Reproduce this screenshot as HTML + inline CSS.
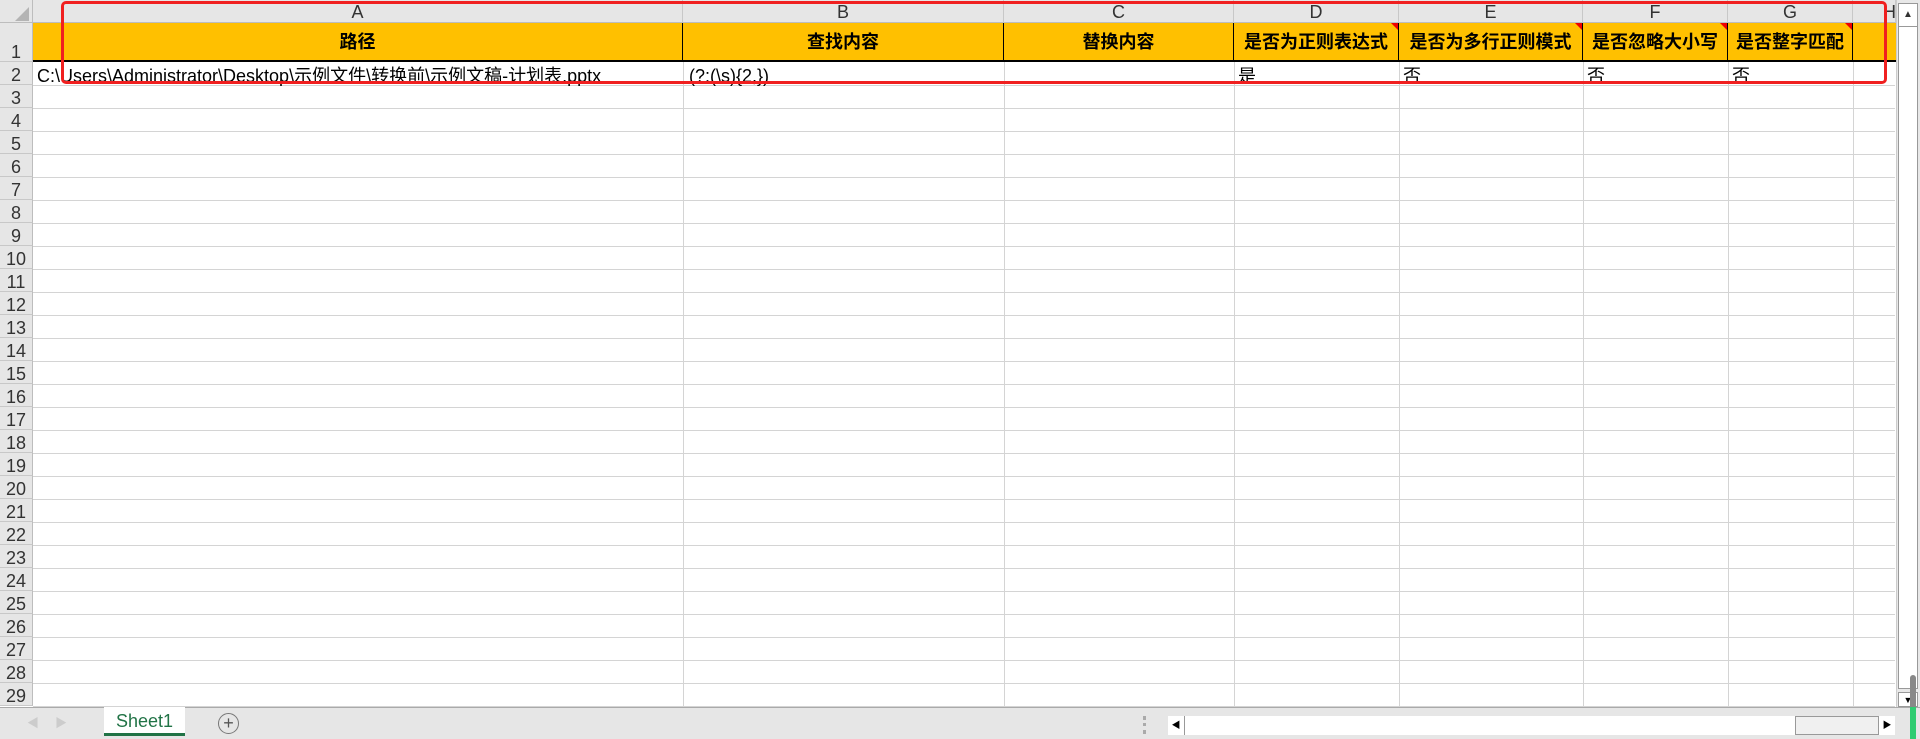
<!DOCTYPE html>
<html><head><meta charset="utf-8"><style>
*{margin:0;padding:0;box-sizing:border-box}
body{width:1920px;height:739px;overflow:hidden;background:#fff;font-family:"Liberation Sans","Noto Sans CJK SC",sans-serif;position:relative}
.a{position:absolute}
.ch{position:absolute;top:0;height:23px;background:#e6e6e6;border-right:1px solid #c8c8c8;border-bottom:1px solid #bdbdbd;text-align:center;font-size:18px;line-height:24px;color:#333}
.rn{position:absolute;left:0;width:33px;background:#e6e6e6;border-right:1px solid #bdbdbd;border-bottom:1px solid #c8c8c8;text-align:center;font-size:18px;color:#333}
.hl{position:absolute;top:23px;height:39px;background:#ffc000;border-right:1px solid #000;border-bottom:2px solid #000;text-align:center;font-size:18px;font-weight:bold;line-height:38px;color:#000}
.tri{position:absolute;right:0;top:0;width:0;height:0;border-top:7px solid #e00;border-left:7px solid transparent}
.vl{position:absolute;top:86px;height:621px;width:1px;background:#d4d4d4}
.hz{position:absolute;left:33px;width:1862px;height:1px;background:#d4d4d4}
.d{position:absolute;top:62px;height:24px;font-size:18px;line-height:29px;color:#000;white-space:nowrap;overflow:hidden}
</style></head><body>
<div class="a" style="left:0;top:0;width:33px;height:23px;background:#e6e6e6;border-right:1px solid #bdbdbd;border-bottom:1px solid #bdbdbd"></div>
<svg class="a" style="left:14px;top:6px" width="16" height="16"><polygon points="15,1 15,15 1,15" fill="#b4b4b4"/></svg>
<div class="ch" style="left:33px;width:650px">A</div>
<div class="ch" style="left:683px;width:321px">B</div>
<div class="ch" style="left:1004px;width:230px">C</div>
<div class="ch" style="left:1234px;width:165px">D</div>
<div class="ch" style="left:1399px;width:184px">E</div>
<div class="ch" style="left:1583px;width:145px">F</div>
<div class="ch" style="left:1728px;width:125px">G</div>
<div class="ch" style="left:1853px;width:43px;text-align:left;padding-left:30px;overflow:hidden">H</div>

<div class="hl" style="left:33px;width:650px">路径</div>
<div class="hl" style="left:683px;width:321px">查找内容</div>
<div class="hl" style="left:1004px;width:230px">替换内容</div>
<div class="hl" style="left:1234px;width:165px">是否为正则表达式<div class="tri"></div></div>
<div class="hl" style="left:1399px;width:184px">是否为多行正则模式<div class="tri"></div></div>
<div class="hl" style="left:1583px;width:145px">是否忽略大小写<div class="tri"></div></div>
<div class="hl" style="left:1728px;width:125px">是否整字匹配<div class="tri"></div></div>
<div class="hl" style="left:1853px;width:43px;border-right:none"></div>

<div class="rn" style="top:23px;height:39px;line-height:58px">1</div>
<div id="rows"></div>
<div class="d" style="left:37px">C:\Users\Administrator\Desktop\示例文件\转换前\示例文稿-计划表.pptx</div>
<div class="d" style="left:689px">(?:(\s){2,})</div>
<div class="d" style="left:1238px">是</div>
<div class="d" style="left:1403px">否</div>
<div class="d" style="left:1587px">否</div>
<div class="d" style="left:1732px">否</div>
<div class="vl" style="left:683px;top:62px;height:645px"></div>
<div class="vl" style="left:1004px;top:62px;height:645px"></div>
<div class="vl" style="left:1234px;top:62px;height:645px"></div>
<div class="vl" style="left:1399px;top:62px;height:645px"></div>
<div class="vl" style="left:1583px;top:62px;height:645px"></div>
<div class="vl" style="left:1728px;top:62px;height:645px"></div>
<div class="vl" style="left:1853px;top:62px;height:645px"></div>
<script>
var h='';for(var i=2;i<=29;i++){var t=62+(i-2)*23;h+='<div class="rn" style="top:'+t+'px;height:23px;line-height:27px">'+i+'</div><div class="hz" style="top:'+(t+23)+'px"></div>';}
document.getElementById('rows').outerHTML=h;
</script>
<div class="a" style="left:61px;top:1px;width:1826px;height:83px;border:3px solid #f02020;border-radius:5px"></div>
<!-- vertical scrollbar -->
<div class="a" style="left:1896px;top:0;width:24px;height:707px;background:#e8e8e8;border-left:1px solid #ccc"></div>
<div class="a" style="left:1898px;top:3px;width:20px;height:686px;background:#fff;border:1px solid #999"></div>
<div class="a" style="left:1898px;top:3px;width:20px;height:24px;border:1px solid #999;font-size:10px;text-align:center;line-height:22px;color:#333">▲</div>
<div class="a" style="left:1898px;top:692px;width:20px;height:15px;border:1px solid #999;font-size:9px;text-align:center;line-height:14px;background:#fff">▼</div>
<!-- sheet bar -->
<div class="a" style="left:0;top:707px;width:1920px;height:32px;background:#e6e6e6;border-top:1px solid #aaa"></div>
<div class="a" style="left:27px;top:714px;font-size:12px;color:#ccc">◀</div>
<div class="a" style="left:55px;top:714px;font-size:12px;color:#ccc">▶</div>
<div class="a" style="left:104px;top:707px;width:81px;height:29px;background:#fff;border-bottom:3px solid #217346;color:#217346;font-size:18px;text-align:center;line-height:28px">Sheet1</div>
<div class="a" style="left:218px;top:713px;width:21px;height:21px;border:1.5px solid #777;border-radius:50%;text-align:center;line-height:18px;font-size:18px;color:#555">+</div>
<div class="a" style="left:1143px;top:716px;width:3px;height:18px;border-left:3px dotted #aaa"></div>
<div class="a" style="left:1168px;top:716px;width:727px;height:19px;background:#f0f0f0;border:1px solid #999"></div>
<div class="a" style="left:1168px;top:716px;width:17px;height:19px;border-right:1px solid #999;background:#fff;font-size:9px;line-height:18px;text-align:center">◀</div>
<div class="a" style="left:1185px;top:716px;width:611px;height:19px;background:#fff;border-right:1px solid #999"></div>
<div class="a" style="left:1878px;top:716px;width:17px;height:19px;border-left:1px solid #999;background:#fff;font-size:9px;line-height:18px;text-align:center">▶</div>
<div class="a" style="left:1910px;top:675px;width:6px;height:64px;background:#888;border-radius:3px"></div>
<div class="a" style="left:1910px;top:707px;width:6px;height:32px;background:#2ecc71"></div>
</body></html>
